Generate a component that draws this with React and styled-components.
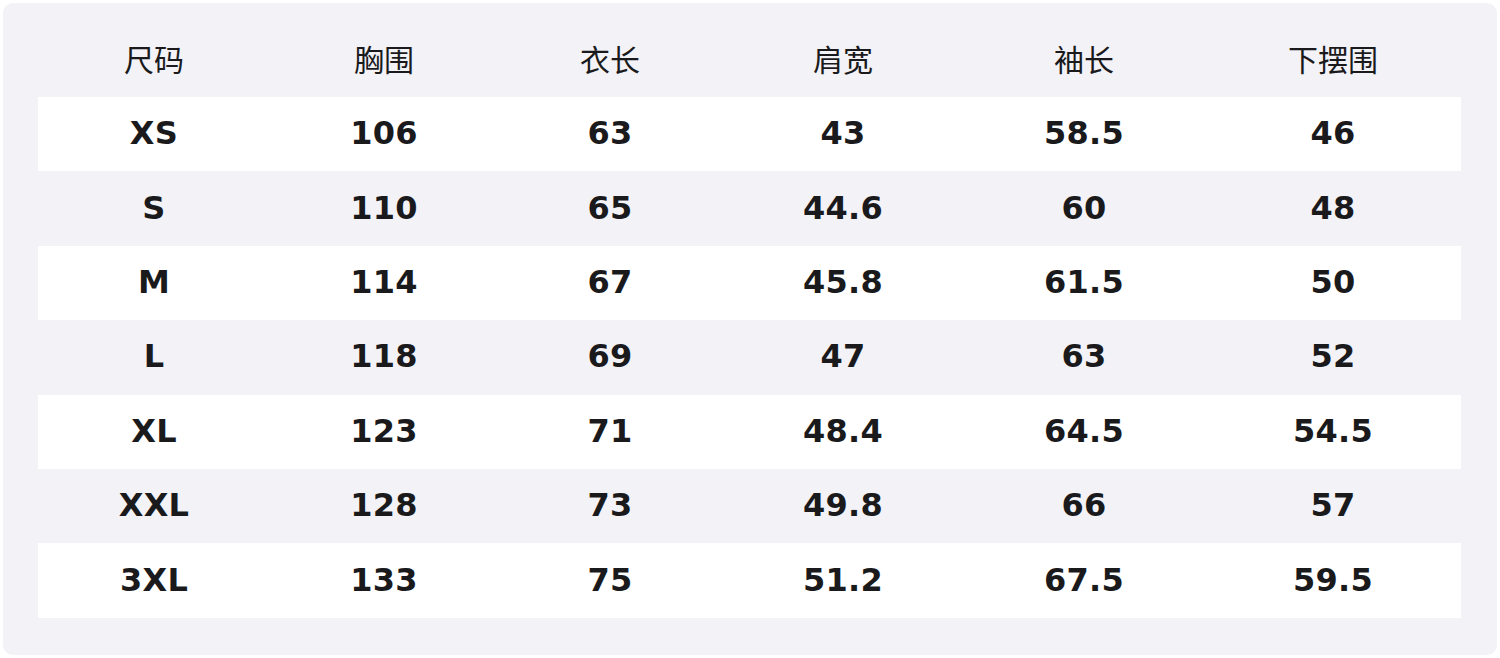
import React from 'react';
import styled, { createGlobalStyle } from 'styled-components';

const GlobalStyle = createGlobalStyle`
  html, body {
    margin: 0;
    padding: 0;
    background: #ffffff;
  }
  body {
    padding: 3px;
    font-family: "DejaVu Sans", "Noto Sans CJK SC", sans-serif;
  }
`;

const Panel = styled.div`
  box-sizing: border-box;
  width: 1494px;
  height: 652px;
  padding: 20px 36px 37px 35px;
  background: #f2f2f7;
  border-radius: 10px;
`;

const COLUMNS = '232px 228px 224px 242px 240px 258px';

const Row = styled.div`
  display: grid;
  grid-template-columns: ${COLUMNS};
  height: ${props => props.header ? '74px' : '74.4px'};
  align-items: center;
  background: ${props => props.striped ? '#ffffff' : 'transparent'};
`;

const Cell = styled.div`
  text-align: center;
  color: #1a1a1c;
  font-size: ${props => props.head ? '30px' : '32px'};
  font-weight: ${props => props.head ? 400 : 700};
  font-family: ${props => props.head
    ? '"Noto Sans CJK SC", "DejaVu Sans", sans-serif'
    : '"DejaVu Sans", "Noto Sans CJK SC", sans-serif'};
  letter-spacing: ${props => props.head ? '0' : '0.3px'};
  padding-bottom: ${props => props.head ? '4px' : '2px'};
`;

const headers = ['尺码', '胸围', '衣长', '肩宽', '袖长', '下摆围'];

const sizes = [
  ['XS', '106', '63', '43', '58.5', '46'],
  ['S', '110', '65', '44.6', '60', '48'],
  ['M', '114', '67', '45.8', '61.5', '50'],
  ['L', '118', '69', '47', '63', '52'],
  ['XL', '123', '71', '48.4', '64.5', '54.5'],
  ['XXL', '128', '73', '49.8', '66', '57'],
  ['3XL', '133', '75', '51.2', '67.5', '59.5'],
];

export default function App() {
  return (
    <>
      <GlobalStyle />
      <Panel>
        <Row header>
          {headers.map(h => <Cell head key={h}>{h}</Cell>)}
        </Row>
        {sizes.map((row, i) => (
          <Row key={row[0]} striped={i % 2 === 0}>
            {row.map((v, j) => <Cell key={j}>{v}</Cell>)}
          </Row>
        ))}
      </Panel>
    </>
  );
}
